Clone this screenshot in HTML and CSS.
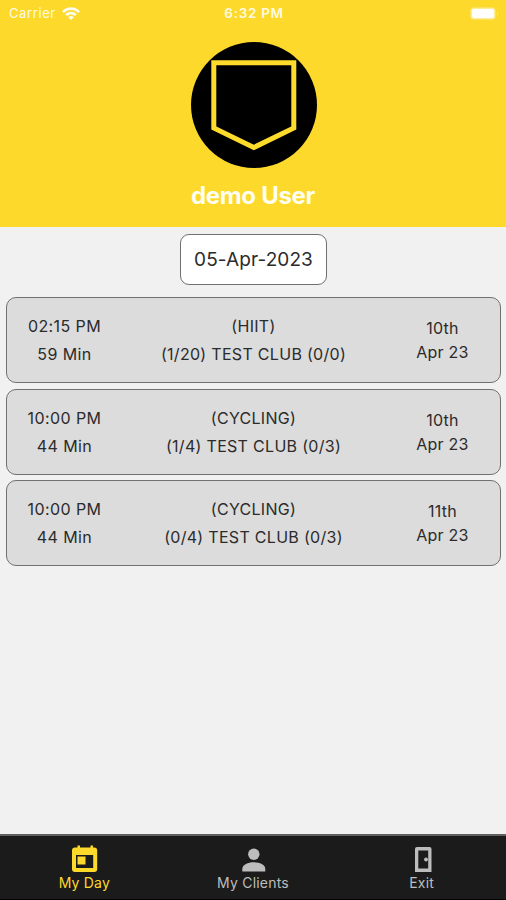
FILE: index.html
```html
<!DOCTYPE html>
<html lang="en">
<head>
<meta charset="utf-8">
<title>My Day</title>
<link rel="stylesheet" href="styles.css">
</head>
<body>
<div class="app">
  <header class="header">
    <div class="status">
      <div class="carrier"><span>Carrier</span>
        <svg class="wifi" viewBox="0 0 18 13"><path d="M0 4.200C5-1.100 13-1.100 18 4.200L16.200 6C12.200 2 5.800 2 1.800 6ZM3.200 7.300C6.500 4 11.500 4 14.800 7.300L13 9.100C10.700 6.900 7.300 6.900 5 9.100ZM6.200 10.200C7.800 8.700 10.200 8.700 11.800 10.200L9 13Z"/></svg>
      </div>
      <span class="clock">6:32 PM</span>
      <div class="power"><svg class="battery" viewBox="0 0 29 13"><rect x=".5" y=".5" width="25" height="12" rx="3.500" fill="#fff" fill-opacity=".5"/><rect x="2" y="2" width="22" height="9" rx="2" fill="#fff"/><path d="M27 4.500q1.500 2 0 4z" fill="#fff" fill-opacity=".6"/></svg></div>
    </div>
    <svg class="avatar" viewBox="0 0 126 126"><circle cx="63" cy="63" r="63"/><path d="M22.800 20.800H102.800V86L62.800 105.500L22.800 86Z" fill="none" stroke="#ffdc2b" stroke-width="5"/></svg>
    <h1 class="name">demo User</h1>
  </header>
  <main class="main">
    <button class="date">05-Apr-2023</button>
    <div class="list">
      <article class="card">
        <div class="col time"><span>02:15 PM</span><span>59 Min</span></div>
        <div class="col session"><span>(HIIT)</span><span>(1/20) TEST CLUB (0/0)</span></div>
        <div class="col day"><span>10th</span><span>Apr 23</span></div>
      </article>
      <article class="card">
        <div class="col time"><span>10:00 PM</span><span>44 Min</span></div>
        <div class="col session"><span>(CYCLING)</span><span>(1/4) TEST CLUB (0/3)</span></div>
        <div class="col day"><span>10th</span><span>Apr 23</span></div>
      </article>
      <article class="card">
        <div class="col time"><span>10:00 PM</span><span>44 Min</span></div>
        <div class="col session"><span>(CYCLING)</span><span>(0/4) TEST CLUB (0/3)</span></div>
        <div class="col day"><span>11th</span><span>Apr 23</span></div>
      </article>
    </div>
  </main>
  <nav class="tabs">
    <a class="tab active">
      <svg class="icon" viewBox="0 0 28 28"><path fill-rule="evenodd" d="M7.500 .5h2.500v2h10.500v-2H23v2h1.200a3 3 0 0 1 3 3V24a3 3 0 0 1-3 3H5a3 3 0 0 1-3-3V5.500a3 3 0 0 1 3-3H7.500ZM6 10v13h17.200V10Z"/><rect x="7.500" y="11.500" width="8" height="8"/></svg>
      <span>My Day</span>
    </a>
    <a class="tab">
      <svg class="icon" viewBox="0 0 28 28"><circle cx="14.800" cy="9.300" r="5.700"/><path d="M3.300 26.500V24C3.300 19.700 9 17.300 14.800 17.300S26.300 19.700 26.300 24V26.500Z"/></svg>
      <span>My Clients</span>
    </a>
    <a class="tab">
      <svg class="icon" viewBox="0 0 28 28"><path fill-rule="evenodd" d="M9 2h12.500a2 2 0 0 1 2 2V27H7V4a2 2 0 0 1 2-2ZM10.300 5.500V23.500h9.900V5.500Z"/><circle cx="18" cy="14.500" r="1.900"/></svg>
      <span>Exit</span>
    </a>
  </nav>
</div>
</body>
</html>
```
FILE: styles.css
```css
* { box-sizing: border-box; }
body { margin: 0; font-family: Inter, sans-serif; color: #2b2b2b; }
.app { width: 506px; height: 900px; display: flex; flex-direction: column; background: #f1f1f1; }
.header { height: 227px; flex: none; background: #fdd92b; display: flex; flex-direction: column; align-items: center; }
.status { width: 100%; height: 26px; padding: 0 7px 0 9px; display: grid; grid-template-columns: 1fr auto 1fr; align-items: center; color: #fffbe0; font-size: 13px; }
.carrier { display: flex; align-items: center; gap: 6px; letter-spacing: .6px; }
.wifi { width: 18px; height: 13px; fill: #fffef0; }
.clock { font-weight: 600; font-size: 13.500px; letter-spacing: .7px; }
.power { display: flex; justify-content: flex-end; }
.battery { width: 29px; height: 13px; }
.avatar { width: 126px; height: 126px; margin-top: 16px; margin-left: 1px; flex: none; }
.name { margin: 12px 0 0; font-size: 24px; line-height: 32px; font-weight: 700; letter-spacing: -.3px; color: #fffef0; }
.main { flex: 1; padding: 7px 5px 0 6px; display: flex; flex-direction: column; align-items: center; }
.date { width: 147px; height: 51px; padding: 0; border: 1px solid #707070; border-radius: 9px; background: #fff; font: 19px Inter, sans-serif; letter-spacing: .1px; color: #2b2b2b; }
.list { align-self: stretch; margin-top: 12px; display: flex; flex-direction: column; gap: 5.700px; }
.card { height: 86px; border: 1px solid #707070; border-radius: 10px; background: #dcdcdc; display: grid; grid-template-columns: 115px 1fr 115px; font-size: 16px; text-align: center; }
.col { display: flex; flex-direction: column; line-height: 28px; padding-top: 14px; white-space: nowrap; }
.time { letter-spacing: .4px; }
.session { letter-spacing: .3px; }
.day { line-height: 24px; padding-top: 18px; letter-spacing: .25px; }
.tabs { height: 66px; flex: none; background: #1b1b1b; border-top: 2px solid #606060; border-bottom: 1px solid #000; display: grid; grid-template-columns: repeat(3, 1fr); }
.tab { display: flex; flex-direction: column; align-items: center; padding-top: 9px; color: #bdbdbd; font-size: 14px; line-height: 20px; letter-spacing: .2px; }
.active { color: #fdd92b; }
.icon { width: 28px; height: 28px; fill: currentColor; flex: none; }
```
